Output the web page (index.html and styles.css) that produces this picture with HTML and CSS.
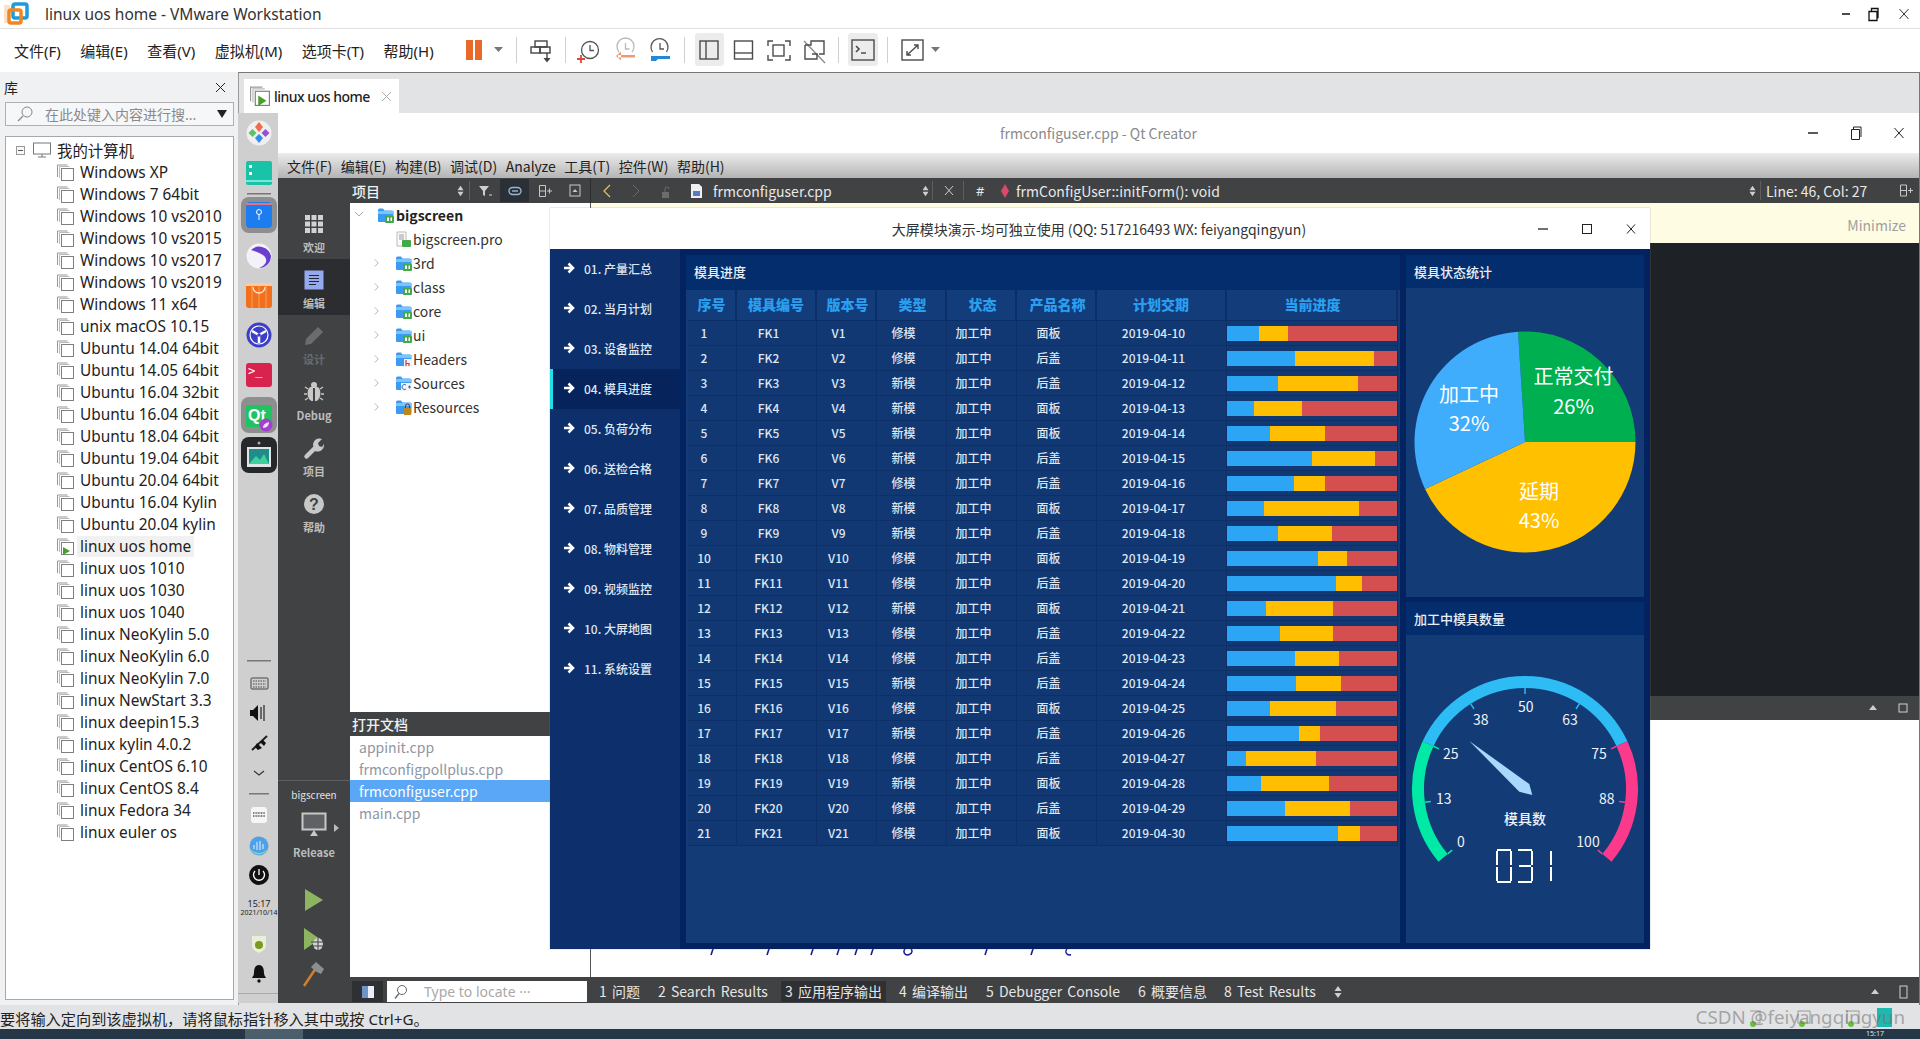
FILE: index.html
```html
<!DOCTYPE html>
<html lang="zh">
<head>
<meta charset="utf-8">
<title>linux uos home - VMware Workstation</title>
<link rel="stylesheet" href="styles.css">
</head>
<body>
<svg class="defs" aria-hidden="true">
  <symbol id="vm" viewBox="0 0 17 17"><path d="M.5 13V1h10" fill="none" stroke="#999"/><path d="M2.500 14V2.500h10" fill="none" stroke="#bbb"/><rect x="4.500" y="4.500" width="12" height="12" fill="#fff" stroke="#7f7f7f"/></symbol>
  <symbol id="folder" viewBox="0 0 16 16"><path d="M0 3a1.500 1.500 0 0 1 1.500-1.500H5l1.500 2H14A1.500 1.500 0 0 1 15.500 5v9a1 1 0 0 1-1 1H1a1 1 0 0 1-1-1z" fill="#3a9bf0"/><rect y="4" width="15.500" height="3" fill="#7cc4f7"/></symbol>
  <symbol id="qtfolder" viewBox="0 0 16 16"><use href="#folder"/><rect x="7" y="9" width="9" height="7" rx="1" fill="#41a948"/><rect x="9" y="10.500" width="2" height="3.500" fill="#fff"/><rect x="12.500" y="10.500" width="1.500" height="3.500" fill="#fff"/></symbol>
  <symbol id="chev" viewBox="0 0 8 10"><path d="M2 1l4 4-4 4" fill="none" stroke="#a8a8a8" stroke-width="1"/></symbol>
  <symbol id="sort" viewBox="0 0 8 14"><path d="M4 1l3.500 5h-7zM4 13l3.500-5h-7z" fill="#cfcfcf"/></symbol>
  <symbol id="arrow" viewBox="0 0 12 12"><path d="M1 6h8.500M5.500 1.500L10 6l-4.500 4.500" fill="none" stroke="#fff" stroke-width="2.500"/></symbol>
</svg>

<header class="vm-title">
  <svg class="vm-logo" width="26" height="24" viewBox="0 0 26 24"><rect x="10" y="2" width="14" height="14" rx="2" fill="none" stroke="#1f9bd8" stroke-width="3.500"/><rect x="6" y="8" width="12" height="13" rx="2" fill="none" stroke="#f0861f" stroke-width="3.500"/><rect x="1" y="3" width="6" height="18" fill="#f0861f" opacity=".25"/></svg>
  <span class="vm-title-text">linux uos home - VMware Workstation</span>
  <svg class="win-ctrls" width="70" height="24" viewBox="0 0 70 24"><path d="M0 12h8" stroke="#111" stroke-width="1.500"/><path d="M27 9.500h8v9h-8zM29.500 9.500V6.500H36v9h-1" fill="none" stroke="#111" stroke-width="1.300"/><path d="M57.500 7l9 10M66.500 7l-9 10" stroke="#333"/></svg>
</header>

<nav class="vm-menu">
  <div class="vm-menu-items"><span>文件(F)</span><span>编辑(E)</span><span>查看(V)</span><span>虚拟机(M)</span><span>选项卡(T)</span><span>帮助(H)</span></div>
  <svg class="vm-tools" width="510" height="43" viewBox="450 29 510 43">
    <rect x="695" y="33" width="29" height="33" rx="3" fill="#ececec"/><rect x="848" y="33" width="30" height="33" rx="3" fill="#ececec"/>
    <g stroke="#d0d0d0"><path d="M516.500 37v26M565.500 37v26M684.500 37v26M838.500 37v26M887.500 37v26"/></g>
    <rect x="466" y="40" width="7" height="20" fill="#e8692a"/><rect x="475" y="40" width="7" height="20" fill="#e8692a"/>
    <path d="M494 47h9l-4.500 5zM931 47h9l-4.500 5z" fill="#777"/>
    <g fill="none" stroke="#444" stroke-width="1.400"><rect x="535" y="41" width="12" height="6"/><rect x="531" y="47" width="9" height="6"/><rect x="540" y="47" width="10" height="6"/><path d="M547 53v7"/></g><path d="M543.500 58h7l-3.500 4.500z" fill="#444"/>
    <g fill="none" stroke="#555" stroke-width="1.300"><circle cx="590" cy="50" r="8.500"/><path d="M590 45v5.500h4"/></g><path d="M581 55v8M577 59h8" stroke="#d9483a" stroke-width="1.800"/>
    <g fill="none" stroke="#b9b9b9" stroke-width="1.300"><path d="M619 52a8.500 8.500 0 1 1 13 0"/><path d="M625.500 43v6h4"/></g><path d="M618 55h17v2.500h-17zM621 51.500l-5 4.500 5 4.500z" fill="#ef9a70"/>
    <g fill="none" stroke="#555" stroke-width="1.300"><path d="M652.500 52a8.500 8.500 0 1 1 14 0"/><path d="M660 43v6h4"/></g><path d="M651 56h19v3h-12l-2 2h-5z" fill="#2388d8"/>
    <g fill="none" stroke="#4c4c4c" stroke-width="1.400"><rect x="700" y="41" width="18" height="18"/><path d="M706 41v18"/><rect x="734.500" y="41" width="18" height="18"/><path d="M734.500 53h18"/><rect x="773" y="45" width="11" height="11"/><path d="M768 46v-5h5M785 41h5v5M790 55v5h-5M773 60h-5v-5"/><path d="M804 41l21 22" stroke="#8a8a8a"/><path d="M805 45h6v-4h13v13h-5M805 45v14h12v-5h-5"/><rect x="852" y="40" width="22" height="20"/><path d="M856 46l3 3-3 3M861 53h5" stroke-width="1.600"/><rect x="902" y="40" width="21" height="20"/><path d="M907 55l11-10M914 45h4v4M907 51v4h4"/></g>
  </svg>
</nav>

<main class="vm-main">
  <aside class="library">
    <div class="lib-head"><span>库</span><svg width="11" height="11" viewBox="0 0 11 11"><path d="M1 1l9 9M10 1l-9 9" stroke="#222"/></svg></div>
    <div class="lib-search">
      <svg width="18" height="18" viewBox="0 0 18 18"><circle cx="11" cy="7" r="5" fill="none" stroke="#888"/><path d="M7 11l-5 5" stroke="#888" stroke-width="1.300"/></svg>
      <span class="lib-search-text">在此处键入内容进行搜...</span>
      <svg width="10" height="8" viewBox="0 0 10 8"><path d="M0 0h10L5 8z" fill="#222"/></svg>
    </div>
    <ul class="lib-tree">
      <li class="lib-root"><svg width="9" height="9" viewBox="0 0 9 9"><rect x=".5" y=".5" width="8" height="8" fill="#f8f8f8" stroke="#999"/><path d="M2 4.500h5" stroke="#555"/></svg><svg width="18" height="17" viewBox="0 0 18 17"><rect x=".5" y="1" width="17" height="11" fill="#fff" stroke="#777"/><path d="M5 15h8M9 12v3" stroke="#777"/></svg><span>我的计算机</span></li>
      <li><svg><use href="#vm"/></svg>Windows XP</li>
      <li><svg><use href="#vm"/></svg>Windows 7 64bit</li>
      <li><svg><use href="#vm"/></svg>Windows 10 vs2010</li>
      <li><svg><use href="#vm"/></svg>Windows 10 vs2015</li>
      <li><svg><use href="#vm"/></svg>Windows 10 vs2017</li>
      <li><svg><use href="#vm"/></svg>Windows 10 vs2019</li>
      <li><svg><use href="#vm"/></svg>Windows 11 x64</li>
      <li><svg><use href="#vm"/></svg>unix macOS 10.15</li>
      <li><svg><use href="#vm"/></svg>Ubuntu 14.04 64bit</li>
      <li><svg><use href="#vm"/></svg>Ubuntu 14.05 64bit</li>
      <li><svg><use href="#vm"/></svg>Ubuntu 16.04 32bit</li>
      <li><svg><use href="#vm"/></svg>Ubuntu 16.04 64bit</li>
      <li><svg><use href="#vm"/></svg>Ubuntu 18.04 64bit</li>
      <li><svg><use href="#vm"/></svg>Ubuntu 19.04 64bit</li>
      <li><svg><use href="#vm"/></svg>Ubuntu 20.04 64bit</li>
      <li><svg><use href="#vm"/></svg>Ubuntu 16.04 Kylin</li>
      <li><svg><use href="#vm"/></svg>Ubuntu 20.04 kylin</li>
      <li class="lib-on"><svg viewBox="0 0 17 17"><use href="#vm"/><path d="M6 9l7 4-7 4z" fill="#4a9e2c"/></svg><span>linux uos home</span></li>
      <li><svg><use href="#vm"/></svg>linux uos 1010</li>
      <li><svg><use href="#vm"/></svg>linux uos 1030</li>
      <li><svg><use href="#vm"/></svg>linux uos 1040</li>
      <li><svg><use href="#vm"/></svg>linux NeoKylin 5.0</li>
      <li><svg><use href="#vm"/></svg>linux NeoKylin 6.0</li>
      <li><svg><use href="#vm"/></svg>linux NeoKylin 7.0</li>
      <li><svg><use href="#vm"/></svg>linux NewStart 3.3</li>
      <li><svg><use href="#vm"/></svg>linux deepin15.3</li>
      <li><svg><use href="#vm"/></svg>linux kylin 4.0.2</li>
      <li><svg><use href="#vm"/></svg>linux CentOS 6.10</li>
      <li><svg><use href="#vm"/></svg>linux CentOS 8.4</li>
      <li><svg><use href="#vm"/></svg>linux Fedora 34</li>
      <li><svg><use href="#vm"/></svg>linux euler os</li>
    </ul>
  </aside>

  <section class="vm-area">
    <div class="tabstrip">
      <div class="tab"><svg width="20" height="20" viewBox="0 0 17 17"><use href="#vm"/><path d="M7 8l7 4.500-7 4.500z" fill="#4a9e2c"/></svg><span>linux uos home</span><svg class="tab-x" width="11" height="11" viewBox="0 0 11 11"><path d="M1 1l9 9M10 1l-9 9" stroke="#aaa"/></svg></div>
    </div>
    <div class="guest">
      <svg class="dock" width="40" height="890" viewBox="238 113 40 890">
        <circle cx="259" cy="133" r="12.500" fill="#efefef"/><path d="M259 122l4 5-4 5-4-5z" fill="#ef6b4a"/><path d="M252.500 129l4 4-4 4-4-4z" fill="#5cc26a"/><path d="M265.500 129l4 4-4 4-4-4z" fill="#9a4fd0"/><path d="M259 134l4 4-4 5-4-5z" fill="#2f8fe8"/>
        <rect x="246" y="161" width="26" height="24" rx="2" fill="#19c3a8"/><rect x="246" y="180" width="26" height="2" fill="#7fe6d6"/><rect x="249" y="165" width="3" height="3" fill="#fff"/><rect x="249" y="172" width="3" height="3" fill="#fff"/>
        <rect x="247" y="193" width="24" height="1.500" fill="#777"/>
        <rect x="241" y="197" width="36" height="36" rx="8" fill="#8e8e8e"/><rect x="246" y="202" width="26" height="26" rx="4" fill="#1c7df0"/><rect x="246" y="203" width="26" height="2" fill="#e9727a"/><circle cx="259" cy="212" r="2.500" fill="none" stroke="#fff"/><path d="M259 214v6" stroke="#fff"/>
        <circle cx="259" cy="256" r="12.500" fill="#f4f2f8"/><path d="M251 250a12 12 0 0 1 20 6 12 12 0 0 1-12 12c5-2 8-5 7-9-1-4-8-7-15-9z" fill="#6a3fd0"/>
        <rect x="246" y="283" width="26" height="25" rx="3" fill="#f2701c"/><path d="M252 283v25M259 283v25M266 283v25" stroke="#f9a060"/><path d="M253 287a6 6 0 0 0 12 0" fill="none" stroke="#ffe4c8" stroke-width="1.300"/><rect x="246" y="283" width="26" height="3" fill="#ffc9a0"/>
        <circle cx="259" cy="335" r="12.500" fill="#3d3fc8"/><circle cx="259" cy="335" r="9" fill="none" stroke="#fff" stroke-width="1.200"/><path d="M259 335v8M259 335l-7-4M259 335l7-4" stroke="#fff" stroke-width="2.500"/><circle cx="259" cy="335" r="1.800" fill="#3d3fc8"/>
        <rect x="246" y="363" width="26" height="24" rx="3" fill="#d8234f"/><text x="248" y="375" class="dock-term">&gt;_</text>
        <rect x="241" y="397" width="36" height="36" rx="8" fill="#8e8e8e"/><rect x="246" y="405" width="26" height="22" rx="1" fill="#1fc35f"/><text x="248" y="421" class="dock-qt">Qt</text><circle cx="266" cy="425" r="6.500" fill="#a13fd0"/><path d="M263 428c0-4 3-5 6-6 0 3-2 6-6 6z" fill="#f0e0ff"/>
        <rect x="241" y="437" width="36" height="36" rx="8" fill="#26282c"/><rect x="247" y="447" width="24" height="20" fill="#dfe6e6"/><rect x="249" y="449" width="20" height="15" fill="#1f8d8a"/><path d="M249 464l7-8 4 4 4-6 5 10z" fill="#3fd0a0"/><circle cx="259" cy="443" r="1.500" fill="#aaa"/>
        <rect x="247" y="660" width="24" height="1.500" fill="#777"/>
        <rect x="251" y="678" width="17" height="11" rx="1" fill="none" stroke="#444"/><path d="M253 681h13M253 684h13M253 687h13" stroke="#444" stroke-dasharray="1.500 1"/>
        <path d="M250 710h3l5-5v16l-5-5h-3z" fill="#111"/><path d="M261 707v12M264 705v16" stroke="#333" stroke-width="1.300"/>
        <path d="M252 750l15-14" stroke="#222" stroke-width="2"/><path d="M255 747l2-4 5 5-4 2zM260 742l3-2 3 3-2 3z" fill="#111"/>
        <path d="M254 771l5 4 5-4" fill="none" stroke="#333" stroke-width="1.200"/>
        <rect x="249" y="793" width="20" height="1.500" fill="#777"/>
        <rect x="251" y="807" width="16" height="16" rx="3" fill="#f6f6f6"/><path d="M253 813h12M253 816h12" stroke="#555" stroke-dasharray="1 .6" stroke-width="1.500"/>
        <circle cx="259" cy="846" r="9.500" fill="#4fa0e8"/><path d="M250 848c3 5 13 8 18 0a9.500 9.500 0 0 1-18 0z" fill="#7dd8b0"/><path d="M254 845v4M257 842v8M260 841v9M263 844v5" stroke="#e8f4ff"/>
        <circle cx="259" cy="875" r="10" fill="#111"/><path d="M255 871a5.500 5.500 0 1 0 8 0M259 869v6" fill="none" stroke="#fff" stroke-width="1.300"/>
        <text x="259" y="907" class="dock-time">15:17</text><text x="259" y="915" class="dock-date">2021/10/14</text>
        <path d="M252 936h14v10c0 3-3 5-7 7-4-2-7-4-7-7z" fill="#e9efd8"/><circle cx="259" cy="945" r="4" fill="#7a9a20"/>
        <path d="M259 965c-4 0-5 4-5 8 0 3-2 4-2 5h14c0-1-2-2-2-5 0-4-1-8-5-8z" fill="#111"/><circle cx="259" cy="981" r="1.700" fill="#111"/>
        <rect x="238" y="993" width="40" height="1" fill="#aaa"/>
      </svg>
      <div class="desk">
        <div class="qt-title"><span class="qt-title-text">frmconfiguser.cpp - Qt Creator</span>
          <svg class="win-ctrls" width="100" height="18" viewBox="0 0 100 18"><path d="M2 9h10" stroke="#222" stroke-width="1.500"/><path d="M45.500 5.500h8v10h-8zM47.500 5.500V3h7.500v10" fill="none" stroke="#222"/><path d="M88.500 4l9 10M97.500 4l-9 10" stroke="#222"/></svg>
        </div>
        <div class="qt-menu"><span>文件(F)</span><span>编辑(E)</span><span>构建(B)</span><span>调试(D)</span><span>Analyze</span><span>工具(T)</span><span>控件(W)</span><span>帮助(H)</span></div>
        <div class="qt-body">
          <div class="modebar">
            <div class="mode"><svg width="24" height="24" viewBox="0 0 24 24" fill="#d2d2d2"><rect x="3" y="3" width="5" height="5"/><rect x="9.500" y="3" width="5" height="5"/><rect x="16" y="3" width="5" height="5"/><rect x="3" y="9.500" width="5" height="5"/><rect x="9.500" y="9.500" width="5" height="5"/><rect x="16" y="9.500" width="5" height="5"/><rect x="3" y="16" width="5" height="5"/><rect x="9.500" y="16" width="5" height="5"/><rect x="16" y="16" width="5" height="5"/></svg><span>欢迎</span></div>
            <div class="mode mode-on"><svg width="24" height="24" viewBox="0 0 24 24"><rect x="2.500" y="2.500" width="19" height="19" fill="#96a8ee"/><path d="M7 7.500h10M7 10.500h10M7 13.500h10M7 16.500h7" stroke="#23262b" stroke-width="1.100"/></svg><span>编辑</span></div>
            <div class="mode mode-off"><svg width="24" height="24" viewBox="0 0 24 24" fill="#6a6c6e"><path d="M16 3l5 5-12 12-6 1 1-6z"/></svg><span>设计</span></div>
            <div class="mode"><svg width="24" height="24" viewBox="0 0 24 24" fill="#c8c8c8"><path d="M7 8c2-2 8-2 10 0 2 3 2 9-1 12-1 1-2 1-3 1V8h-2v13c-1 0-2 0-3-1-3-3-3-9-1-12z"/><circle cx="12" cy="5" r="3"/><path d="M6 9L3 7M18 9l3-2M5 14H2M19 14h3M6 18l-3 2M18 18l3 2" stroke="#c8c8c8" stroke-width="1.300"/></svg><span class="mode-latin">Debug</span></div>
            <div class="mode"><svg width="24" height="24" viewBox="0 0 24 24"><path d="M4.500 20.500L13 12" stroke="#c8c8c8" stroke-width="4.500" stroke-linecap="round"/><path d="M11 9a6.500 6.500 0 0 1 9-6l-4 4 1 3 3 1 2-3a6.500 6.500 0 0 1-9 7z" fill="#c8c8c8"/></svg><span>项目</span></div>
            <div class="mode"><svg width="24" height="24" viewBox="0 0 24 24"><circle cx="12" cy="12" r="10" fill="#c8c8c8"/><text x="12" y="17.500" class="mode-q">?</text></svg><span>帮助</span></div>
            <div class="kit">
              <span class="kit-name">bigscreen</span>
              <div class="kit-mon"><svg width="26" height="24" viewBox="0 0 26 24"><rect x="1.500" y="1.500" width="23" height="16" fill="#5f6164" stroke="#c8c8c8" stroke-width="2"/><path d="M9 24l4-6 4 6z" fill="#c8c8c8"/></svg><svg class="kit-arrow" width="5" height="8" viewBox="0 0 5 8"><path d="M0 0l5 4-5 4z" fill="#bbb"/></svg></div>
              <span class="kit-rel">Release</span>
              <svg class="kit-play" width="20" height="24" viewBox="0 0 20 24"><path d="M1 1l18 11L1 23z" fill="#8db461"/></svg>
              <svg class="kit-dbg" width="22" height="24" viewBox="0 0 22 24"><path d="M1 1l16 11L1 23z" fill="#8db461"/><ellipse cx="15" cy="17" rx="5" ry="6" fill="#d4d4d4"/><path d="M15 11v12M8 15h14M8 19h14" stroke="#404244"/></svg>
              <svg class="kit-ham" width="24" height="28" viewBox="0 0 24 28"><path d="M3 26L15 8" stroke="#d47f2a" stroke-width="2.500"/><path d="M10 7l5-5 8 7-3 5-4-2-2-1z" fill="#8e8e8e"/></svg>
            </div>
          </div>
          <div class="qt-right">
            <div class="qt-tools">
              <span class="tool-label">项目</span>
              <svg width="136" height="25" viewBox="455 178 136 25"><use href="#sort" x="457" y="185" width="7" height="12"/><path d="M469.500 181v19" stroke="#5c5e60"/><path d="M479 186h10l-4 5v5l-2-1v-4z" fill="#cfcfcf"/><path d="M489 195h3" stroke="#cfcfcf"/><rect x="500" y="179" width="29" height="23" fill="#2a3038"/><rect x="509" y="187.500" width="12" height="7" rx="3.500" fill="none" stroke="#9cb4cc" stroke-width="1.400"/><path d="M512 191h6" stroke="#9cb4cc" stroke-width="1.400"/><path d="M539.500 185.500h6v11h-6zM539.500 191h6M547 191h5M549.500 188.500v5" fill="none" stroke="#c8c8c8"/><rect x="570" y="185" width="10" height="11" fill="none" stroke="#c8c8c8"/><path d="M572.500 192l2.500-3 2.500 3z" fill="#c8c8c8"/><path d="M590.500 178v25" stroke="#2b2d30"/></svg>
              <svg width="122" height="25" viewBox="591 178 122 25"><path d="M610 185l-6 6 6 6" fill="none" stroke="#e6c65a" stroke-width="1.200"/><path d="M633 185l6 6-6 6" fill="none" stroke="#6a6c6e"/><path d="M662 192h7v6h-7z" fill="#6a6c6e"/><path d="M665 192v-3a2 2 0 0 1 4 0" fill="none" stroke="#6a6c6e"/><path d="M691 184h8l3 3v11h-11z" fill="#f0f0f0"/><rect x="693" y="191" width="7" height="5" fill="#5a78c8"/></svg>
              <span class="tool-file">frmconfiguser.cpp</span>
              <svg width="92" height="25" viewBox="923 178 92 25"><use href="#sort" x="922" y="185" width="7" height="12"/><path d="M932.500 181v19" stroke="#5c5e60"/><path d="M945 186l8 9M953 186l-8 9" stroke="#cfcfcf"/><path d="M963.500 181v19" stroke="#5c5e60"/><text x="976" y="196" class="tool-hash">#</text><path d="M1005 184l4 7-4 7-4-7z" fill="#d94a6a"/></svg>
              <span class="tool-func">frmConfigUser::initForm(): void</span>
              <svg width="12" height="25" viewBox="1749 178 12 25"><use href="#sort" x="1749" y="185" width="7" height="12"/><path d="M1760.500 181v19" stroke="#5c5e60"/></svg>
              <span class="tool-line">Line: 46, Col: 27</span>
              <svg width="20" height="25" viewBox="0 0 20 25"><path d="M2.500 7h6v11h-6zM2.500 12.500h6M10 12.500h5M12.500 10v5" fill="none" stroke="#c8c8c8"/></svg>
            </div>
            <div class="qt-work">
              <div class="qt-side">
                <ul class="proj">
                  <li class="proj-root"><svg class="p-chev-down" width="10" height="8" viewBox="0 0 10 8"><path d="M1 1l4 4 4-4" fill="none" stroke="#a8a8a8"/></svg><svg width="16" height="16"><use href="#qtfolder"/></svg><b>bigscreen</b></li>
                  <li class="proj-file"><svg width="15" height="16" viewBox="0 0 15 16"><path d="M1 1h9v14H1z" fill="#fafafa" stroke="#bbb"/><path d="M3 4h5M3 6h5M3 8h5" stroke="#999"/><rect x="6" y="9" width="9" height="7" rx="1" fill="#41a948"/></svg>bigscreen.pro</li>
                  <li class="proj-dir"><svg class="p-chev" width="7" height="10"><use href="#chev"/></svg><svg width="16" height="16"><use href="#qtfolder"/></svg>3rd</li>
                  <li class="proj-dir"><svg class="p-chev" width="7" height="10"><use href="#chev"/></svg><svg width="16" height="16"><use href="#qtfolder"/></svg>class</li>
                  <li class="proj-dir"><svg class="p-chev" width="7" height="10"><use href="#chev"/></svg><svg width="16" height="16"><use href="#qtfolder"/></svg>core</li>
                  <li class="proj-dir"><svg class="p-chev" width="7" height="10"><use href="#chev"/></svg><svg width="16" height="16"><use href="#qtfolder"/></svg>ui</li>
                  <li class="proj-dir"><svg class="p-chev" width="7" height="10"><use href="#chev"/></svg><svg width="16" height="16" viewBox="0 0 16 16"><use href="#folder"/><rect x="8" y="8" width="8" height="8" fill="#f4f4f4"/><path d="M10 9v6M10 12.500h3v2.500" fill="none" stroke="#c83a3a" stroke-width="1.200"/></svg>Headers</li>
                  <li class="proj-dir"><svg class="p-chev" width="7" height="10"><use href="#chev"/></svg><svg width="16" height="16" viewBox="0 0 16 16"><use href="#folder"/><rect x="5" y="8" width="11" height="8" fill="#f4f4f4"/><path d="M10 10a2.500 2.500 0 1 0 0 4" fill="none" stroke="#2a6fb8"/><path d="M12 12h3M13.500 10.500v3" stroke="#2a6fb8"/></svg>Sources</li>
                  <li class="proj-dir"><svg class="p-chev" width="7" height="10"><use href="#chev"/></svg><svg width="16" height="16" viewBox="0 0 16 16"><use href="#folder"/><rect x="8" y="9" width="7" height="7" fill="#c0851e"/><path d="M9.500 9V7a2 2 0 0 1 4 0v2" fill="none" stroke="#444"/></svg>Resources</li>
                </ul>
                <div class="docs-head"><span>打开文档</span><svg width="40" height="24" viewBox="517 712 40 24"><use href="#sort" x="517" y="718" width="7" height="12"/><path d="M530.500 715v18" stroke="#5c5e60"/><path d="M539.500 718.500h6v11h-6zM539.500 724h6" fill="none" stroke="#c8c8c8"/></svg></div>
                <ul class="docs"><li>appinit.cpp</li><li>frmconfigpollplus.cpp</li><li class="docs-on">frmconfiguser.cpp</li><li>main.cpp</li></ul>
              </div>
              <div class="qt-editor">
                <div class="infobar"><span>Minimize</span></div>
                <div class="code"></div>
                <div class="out-bar"><svg width="60" height="24" viewBox="0 0 60 24"><path d="M11 14l4-5 4 5z" fill="#cfcfcf"/><rect x="41" y="8" width="8" height="8" fill="none" stroke="#cfcfcf"/></svg></div>
                <div class="out-pane"><svg class="out-marks" width="480" height="8" viewBox="590 949 480 8"><path d="M712 949l-2 6M768 949l-2 6M812 949l-2 6M838 949l-2 6M856 949l-2 6M872 949l-2 6M986 949l-2 6M1032 949l-2 6" stroke="#1a1a9e" stroke-width="1.600"/><path d="M904 949a3 3 0 0 0 5 5 3 3 0 0 0 1-5M1066 949a3 3 0 0 0 5 5 3 3 0 0 0 1-5" fill="none" stroke="#1a1a9e" stroke-width="1.500"/></svg></div>
              </div>
            </div>
            <div class="qt-bottom">
              <span class="side-toggle"><svg width="12" height="12" viewBox="0 0 12 12"><rect width="12" height="12" fill="#e8eef8"/><rect width="6" height="12" fill="#6d93c8"/></svg></span>
              <div class="locate"><svg width="16" height="16" viewBox="0 0 16 16"><circle cx="9" cy="6" r="4.500" fill="none" stroke="#666"/><path d="M6 9.500l-4 5" stroke="#666" stroke-width="1.300"/></svg><span>Type to locate ···</span></div>
              <div class="out-tabs"><span>1 问题</span><span>2 Search Results</span><span class="out-tab-on">3 应用程序输出</span><span>4 编译输出</span><span>5 Debugger Console</span><span>6 概要信息</span><span>8 Test Results</span><svg width="8" height="14"><use href="#sort"/></svg></div>
              <svg class="bottom-end" width="50" height="24" viewBox="0 0 50 24"><path d="M2 14l4-5 4 5z" fill="#cfcfcf"/><rect x="31" y="6" width="7" height="12" fill="none" stroke="#cfcfcf"/></svg>
            </div>
          </div>
        </div>
      </div>
    </div>
  </section>
</main>

<footer class="status">
  <span>要将输入定向到该虚拟机，请将鼠标指针移入其中或按 Ctrl+G。</span>
  <svg class="status-icons" width="170" height="22" viewBox="1750 1006 170 22"><g fill="none" stroke="#9a9a9a"><rect x="1748" y="1011" width="12" height="12"/><rect x="1798" y="1011" width="12" height="12"/><rect x="1847" y="1011" width="12" height="12"/></g><circle cx="1753" cy="1024" r="3" fill="#6cbf3a"/><circle cx="1802" cy="1024" r="3" fill="#6cbf3a"/><circle cx="1851" cy="1024" r="3" fill="#6cbf3a"/><rect x="1877" y="1008" width="15" height="19" fill="#1fb8b0"/></svg>
  <span class="watermark">CSDN @feiyangqingyun</span>
</footer>
<div class="taskbar"><span class="task-on"></span><span class="task-time">15:17</span></div>

<section class="dash">
  <div class="dash-title"><span>大屏模块演示-均可独立使用 (QQ: 517216493 WX: feiyangqingyun)</span>
    <svg class="dash-ctrls" width="100" height="14" viewBox="0 0 100 14"><path d="M2 7h10" stroke="#222" stroke-width="1.300"/><rect x="46.500" y="2.500" width="9" height="9" fill="none" stroke="#222"/><path d="M91 2.500l8 9M99 2.500l-8 9" stroke="#222"/></svg>
  </div>
  <div class="dash-body">
    <nav class="dash-nav">
      <a><svg width="12" height="12"><use href="#arrow"/></svg>01. 产量汇总</a>
      <a><svg width="12" height="12"><use href="#arrow"/></svg>02. 当月计划</a>
      <a><svg width="12" height="12"><use href="#arrow"/></svg>03. 设备监控</a>
      <a class="dash-nav-on"><svg width="12" height="12"><use href="#arrow"/></svg>04. 模具进度</a>
      <a><svg width="12" height="12"><use href="#arrow"/></svg>05. 负荷分布</a>
      <a><svg width="12" height="12"><use href="#arrow"/></svg>06. 送检合格</a>
      <a><svg width="12" height="12"><use href="#arrow"/></svg>07. 品质管理</a>
      <a><svg width="12" height="12"><use href="#arrow"/></svg>08. 物料管理</a>
      <a><svg width="12" height="12"><use href="#arrow"/></svg>09. 视频监控</a>
      <a><svg width="12" height="12"><use href="#arrow"/></svg>10. 大屏地图</a>
      <a><svg width="12" height="12"><use href="#arrow"/></svg>11. 系统设置</a>
    </nav>
    <div class="panel panel-main">
      <h2 class="panel-head">模具进度</h2>
      <div class="panel-body">
        <table class="mold">
          <colgroup><col class="c1"><col class="c2"><col class="c3"><col class="c4"><col class="c5"><col class="c6"><col class="c7"><col class="c8"></colgroup>
          <thead><tr><th>序号</th><th>模具编号</th><th>版本号</th><th>类型</th><th>状态</th><th>产品名称</th><th>计划交期</th><th>当前进度</th></tr></thead>
          <tbody>
<tr><td>1</td><td>FK1</td><td>V1</td><td>修模</td><td>加工中</td><td>面板</td><td>2019-04-10</td><td class="td-bar"><div class="bar"><i style="width:18.9%"></i><b style="width:17%"></b><u></u></div></td></tr>
<tr><td>2</td><td>FK2</td><td>V2</td><td>修模</td><td>加工中</td><td>后盖</td><td>2019-04-11</td><td class="td-bar"><div class="bar"><i style="width:40.2%"></i><b style="width:46.1%"></b><u></u></div></td></tr>
<tr><td>3</td><td>FK3</td><td>V3</td><td>新模</td><td>加工中</td><td>后盖</td><td>2019-04-12</td><td class="td-bar"><div class="bar"><i style="width:30%"></i><b style="width:47.1%"></b><u></u></div></td></tr>
<tr><td>4</td><td>FK4</td><td>V4</td><td>新模</td><td>加工中</td><td>面板</td><td>2019-04-13</td><td class="td-bar"><div class="bar"><i style="width:16.1%"></i><b style="width:28.1%"></b><u></u></div></td></tr>
<tr><td>5</td><td>FK5</td><td>V5</td><td>新模</td><td>加工中</td><td>面板</td><td>2019-04-14</td><td class="td-bar"><div class="bar"><i style="width:25.3%"></i><b style="width:32.4%"></b><u></u></div></td></tr>
<tr><td>6</td><td>FK6</td><td>V6</td><td>新模</td><td>加工中</td><td>后盖</td><td>2019-04-15</td><td class="td-bar"><div class="bar"><i style="width:50.1%"></i><b style="width:36.7%"></b><u></u></div></td></tr>
<tr><td>7</td><td>FK7</td><td>V7</td><td>修模</td><td>加工中</td><td>后盖</td><td>2019-04-16</td><td class="td-bar"><div class="bar"><i style="width:39.7%"></i><b style="width:18%"></b><u></u></div></td></tr>
<tr><td>8</td><td>FK8</td><td>V8</td><td>新模</td><td>加工中</td><td>面板</td><td>2019-04-17</td><td class="td-bar"><div class="bar"><i style="width:21.7%"></i><b style="width:56.1%"></b><u></u></div></td></tr>
<tr><td>9</td><td>FK9</td><td>V9</td><td>新模</td><td>加工中</td><td>后盖</td><td>2019-04-18</td><td class="td-bar"><div class="bar"><i style="width:30%"></i><b style="width:31.9%"></b><u></u></div></td></tr>
<tr><td>10</td><td>FK10</td><td>V10</td><td>修模</td><td>加工中</td><td>面板</td><td>2019-04-19</td><td class="td-bar"><div class="bar"><i style="width:53.7%"></i><b style="width:17%"></b><u></u></div></td></tr>
<tr><td>11</td><td>FK11</td><td>V11</td><td>修模</td><td>加工中</td><td>后盖</td><td>2019-04-20</td><td class="td-bar"><div class="bar"><i style="width:64.3%"></i><b style="width:15.4%"></b><u></u></div></td></tr>
<tr><td>12</td><td>FK12</td><td>V12</td><td>新模</td><td>加工中</td><td>面板</td><td>2019-04-21</td><td class="td-bar"><div class="bar"><i style="width:22.9%"></i><b style="width:39.5%"></b><u></u></div></td></tr>
<tr><td>13</td><td>FK13</td><td>V13</td><td>修模</td><td>加工中</td><td>后盖</td><td>2019-04-22</td><td class="td-bar"><div class="bar"><i style="width:31.2%"></i><b style="width:31.2%"></b><u></u></div></td></tr>
<tr><td>14</td><td>FK14</td><td>V14</td><td>修模</td><td>加工中</td><td>后盖</td><td>2019-04-23</td><td class="td-bar"><div class="bar"><i style="width:40%"></i><b style="width:25.9%"></b><u></u></div></td></tr>
<tr><td>15</td><td>FK15</td><td>V15</td><td>新模</td><td>加工中</td><td>后盖</td><td>2019-04-24</td><td class="td-bar"><div class="bar"><i style="width:40.6%"></i><b style="width:26.5%"></b><u></u></div></td></tr>
<tr><td>16</td><td>FK16</td><td>V16</td><td>修模</td><td>加工中</td><td>面板</td><td>2019-04-25</td><td class="td-bar"><div class="bar"><i style="width:25.3%"></i><b style="width:38.8%"></b><u></u></div></td></tr>
<tr><td>17</td><td>FK17</td><td>V17</td><td>新模</td><td>加工中</td><td>后盖</td><td>2019-04-26</td><td class="td-bar"><div class="bar"><i style="width:42.4%"></i><b style="width:12.3%"></b><u></u></div></td></tr>
<tr><td>18</td><td>FK18</td><td>V18</td><td>修模</td><td>加工中</td><td>后盖</td><td>2019-04-27</td><td class="td-bar"><div class="bar"><i style="width:11.2%"></i><b style="width:41.2%"></b><u></u></div></td></tr>
<tr><td>19</td><td>FK19</td><td>V19</td><td>新模</td><td>加工中</td><td>面板</td><td>2019-04-28</td><td class="td-bar"><div class="bar"><i style="width:20%"></i><b style="width:40%"></b><u></u></div></td></tr>
<tr><td>20</td><td>FK20</td><td>V20</td><td>修模</td><td>加工中</td><td>后盖</td><td>2019-04-29</td><td class="td-bar"><div class="bar"><i style="width:34.1%"></i><b style="width:38.3%"></b><u></u></div></td></tr>
<tr><td>21</td><td>FK21</td><td>V21</td><td>修模</td><td>加工中</td><td>面板</td><td>2019-04-30</td><td class="td-bar"><div class="bar"><i style="width:65.3%"></i><b style="width:12.9%"></b><u></u></div></td></tr>
          </tbody>
        </table>
      </div>
    </div>
    <div class="dash-right">
      <div class="panel panel-pie">
        <h2 class="panel-head panel-head-r">模具状态统计</h2>
        <div class="panel-body">
          <svg class="chart" width="238" height="309" viewBox="1406 288 238 309">
            <path d="M1525 442L1518.060 331.720A110.500 110.500 0 0 1 1635.500 442Z" fill="#00b050"/>
            <path d="M1525 442L1635.500 442A110.500 110.500 0 0 1 1425.020 489.050Z" fill="#ffc000"/>
            <path d="M1525 442L1425.020 489.050A110.500 110.500 0 0 1 1518.060 331.720Z" fill="#3fadfc"/>
            <g class="pie-text">
              <text x="1573.500" y="384">正常交付</text><text x="1573.500" y="414">26%</text>
              <text x="1469" y="402">加工中</text><text x="1469" y="431">32%</text>
              <text x="1539" y="499">延期</text><text x="1539" y="528">43%</text>
            </g>
          </svg>
        </div>
      </div>
      <div class="panel panel-gauge">
        <h2 class="panel-head panel-head-r">加工中模具数量</h2>
        <div class="panel-body">
          <svg class="chart" width="238" height="308" viewBox="1406 635 238 308">
            <title>031</title>
            <g fill="none" stroke-width="12">
              <path d="M1443.040 857.800A107 107 0 0 1 1428.020 743.800" stroke="#00eaa6"/>
              <path d="M1428.020 743.800A107 107 0 0 1 1621.980 743.800" stroke="#2dbcf4"/>
              <path d="M1621.980 743.800A107 107 0 0 1 1606.960 857.800" stroke="#fb3a8b"/>
            </g>
            <g stroke-width="1.500">
              <path d="M1447.600 853.900L1452.200 850.100M1424.900 802.200L1430.800 801.400M1433.500 746.300L1438.900 748.900" stroke="#00eaa6"/>
              <path d="M1470.700 703.800L1474 708.900M1525 688V694M1579.300 703.800L1576 708.900" stroke="#2dbcf4"/>
              <path d="M1616.500 746.300L1611.100 748.900M1625.100 802.200L1619.200 801.400M1602.400 853.900L1597.800 850.100" stroke="#fb3a8b"/>
            </g>
            <path d="M1469.300 741L1529.300 784L1532.300 795L1519.300 791.700Z" fill="#a8d8fb"/>
            <g class="g-labels">
              <text x="1461" y="847">0</text><text x="1443.700" y="804">13</text><text x="1450.700" y="759">25</text><text x="1480.700" y="725">38</text><text x="1525.700" y="712">50</text><text x="1570" y="725">63</text><text x="1599" y="759">75</text><text x="1606.700" y="804">88</text><text x="1588" y="847">100</text>
            </g>
            <text x="1525" y="824" class="g-title">模具数</text>
            <g fill="#fff">
              <rect x="1497" y="849" width="14" height="2"/><rect x="1497" y="881" width="14" height="2"/><rect x="1496" y="851" width="2" height="14"/><rect x="1496" y="867" width="2" height="14"/><rect x="1510" y="851" width="2" height="14"/><rect x="1510" y="867" width="2" height="14"/>
              <rect x="1518" y="849" width="14" height="2"/><rect x="1519" y="865" width="12" height="2"/><rect x="1518" y="881" width="14" height="2"/><rect x="1531" y="851" width="2" height="14"/><rect x="1531" y="867" width="2" height="14"/>
              <rect x="1550" y="851" width="2" height="14"/><rect x="1550" y="867" width="2" height="14"/>
            </g>
          </svg>
        </div>
      </div>
    </div>
  </div>
</section>
</body>
</html>
```

FILE: styles.css
```css
* { box-sizing: border-box; }
html, body { margin: 0; padding: 0; }
body {
  position: relative;
  width: 1920px;
  height: 1039px;
  overflow: hidden;
  display: flex;
  flex-direction: column;
  background: #fff;
  color: #222;
  font-family: "Noto Sans", "Noto Sans CJK SC", sans-serif;
  font-size: 14px;
}
ul { list-style: none; margin: 0; padding: 0; }
h2 { margin: 0; }
svg { display: block; flex: none; }
.defs { position: absolute; width: 0; height: 0; }

.vm-title { height: 29px; flex: none; display: flex; align-items: center; padding-left: 3px; border-bottom: 1px solid #e0e0e0; }
.vm-title-text { margin-left: 16px; font-size: 15.500px; color: #333; }
.win-ctrls { margin-left: auto; }
.vm-title .win-ctrls { margin-right: 8px; }

.vm-menu { height: 43px; flex: none; display: flex; align-items: center; }
.vm-menu-items { width: 450px; display: flex; gap: 19.500px; padding-left: 14px; font-size: 15px; color: #222; white-space: nowrap; }

.vm-main { height: 933px; flex: none; display: flex; }
.library { width: 238px; flex: none; display: flex; flex-direction: column; background: #f0f1f2; padding: 0 4px 5px 5px; }
.lib-head { height: 30px; flex: none; display: flex; align-items: center; justify-content: space-between; padding: 0 8px 0 0; font-size: 14px; margin-left: -1px; }
.lib-search { height: 24px; width: 229px; flex: none; display: flex; align-items: center; border: 1px solid #b0b0b0; background: #f6f7f8; padding: 0 6px 0 10px; gap: 11px; color: #8a8a8a; font-size: 14px; }
.lib-search-text { flex: 1; white-space: nowrap; overflow: hidden; }
.lib-tree { margin-top: 10px; flex: 1; width: 229px; background: #fff; border: 1px solid #a8a8a8; padding: 2px 0 0 51px; overflow: hidden; }
.lib-tree li { height: 22px; display: flex; align-items: center; gap: 6px; font-size: 15.400px; white-space: nowrap; color: #222; }
.lib-tree li > svg { width: 17px; height: 17px; }
.lib-tree .lib-root { margin-left: -41px; gap: 4px; }
.lib-tree .lib-root > svg:first-child { width: 9px; height: 9px; margin-right: 4px; }
.lib-tree .lib-root > svg:nth-child(2) { width: 18px; height: 17px; }
.lib-root span { margin-left: 2px; }
.lib-on span { background: #f1f1f1; padding: 0 3px; margin-left: -3px; }

.vm-area { flex: 1; display: flex; flex-direction: column; border-top: 1px solid #777; border-left: 1px solid #9a9a9a; border-right: 1px solid #777; min-width: 0; }
.tabstrip { height: 40px; flex: none; background: #e1e3e5; padding: 6px 0 0 5px; }
.tab { width: 155px; height: 34px; background: #fff; display: flex; align-items: center; padding-left: 6px; font-size: 14px; font-weight: 500; color: #222; letter-spacing: -.5px; }
.tab span { margin-left: 4px; }
.tab-x { margin-left: 11px; }

.guest { flex: 1; display: flex; min-height: 0; background: #e2e3e5; }
.dock { background: #cfcfcf; margin-left: -1px; }
.dock-term { font: 12px "DejaVu Sans Mono", monospace; fill: #fff; }
.dock-qt { font: bold 16px "Liberation Sans", sans-serif; fill: #fff; }
.dock-time { font: 9px "Noto Sans", sans-serif; fill: #222; text-anchor: middle; }
.dock-date { font: 7px "Noto Sans", sans-serif; fill: #222; text-anchor: middle; }
.desk { flex: 1; display: flex; flex-direction: column; min-width: 0; height: 890px; font-family: "Noto Sans CJK SC", "Noto Sans", sans-serif; }
.qt-title { height: 40px; flex: none; background: #fff; display: flex; align-items: center; padding-left: 722px; }
.qt-title-text { font-size: 14px; color: #8a8a8a; }
.qt-title .win-ctrls { margin-right: 13px; }
.qt-menu { height: 25px; flex: none; background: linear-gradient(#ececec, #b4b4b4); display: flex; align-items: center; gap: 8.500px; padding-left: 9px; font-size: 14px; color: #222; white-space: nowrap; }
.qt-body { flex: 1; display: flex; min-height: 0; }

.modebar { width: 72px; flex: none; background: #404244; padding-top: 25px; display: flex; flex-direction: column; }
.mode { height: 56px; flex: none; display: flex; flex-direction: column; align-items: center; padding-top: 9px; gap: 4px; color: #bdbdbd; font-size: 11px; font-weight: 700; line-height: 14px; }
.mode-on { background: #2b2d30; }
.mode-off { color: #6a6c6e; }
.mode-latin { font-weight: 700; }
.mode-q { font: bold 16px "Liberation Sans", sans-serif; fill: #404244; text-anchor: middle; }
.kit { margin-top: auto; height: 223px; border-top: 1px solid #5c5e60; display: flex; flex-direction: column; align-items: center; }
.kit-name { margin-top: 6px; font-size: 10px; color: #e4e4e4; line-height: 16px; }
.kit-mon { position: relative; margin-top: 9px; }
.kit-arrow { position: absolute; left: 33px; top: 12px; }
.kit-rel { margin-top: 9px; font-size: 11px; font-weight: 700; color: #bdbdbd; line-height: 14px; }
.kit-play { margin-top: 29px; }
.kit-dbg { margin-top: 15px; }
.kit-ham { margin-top: 9px; margin-right: 2px; }

.qt-right { flex: 1; min-width: 0; display: flex; flex-direction: column; }
.qt-tools { height: 25px; flex: none; background: #404244; display: flex; align-items: center; color: #e8e8e8; white-space: nowrap; }
.tool-label { width: 105px; padding-left: 2px; font-size: 14px; font-weight: 500; color: #f0f0f0; }
.tool-file { width: 210px; font-size: 14px; }
.tool-hash { font: 13px "Noto Sans", sans-serif; fill: #e8e8e8; }
.tool-func { width: 734px; padding-left: 1px; font-size: 14px; }
.tool-line { width: 137px; padding-left: 5px; font-size: 14px; }
.qt-work { flex: 1; display: flex; min-height: 0; }
.qt-side { width: 241px; flex: none; background: #fff; display: flex; flex-direction: column; border-right: 1px solid #555; }
.proj { height: 509px; flex: none; font-size: 14px; color: #333; }
.proj li { height: 24px; display: flex; align-items: center; }
.proj-root { padding-left: 4px; }
.p-chev-down { margin-right: 14px; }
.proj-root svg:nth-child(2) { margin-right: 2px; }
.proj-root b { font-weight: 700; color: #222; }
.proj-file { padding-left: 46px; }
.proj-file svg { margin-right: 2px; }
.proj-dir { padding-left: 23px; }
.p-chev { margin-right: 16px; }
.proj-dir svg:nth-child(2) { margin-right: 1px; }
.docs-head { height: 24px; flex: none; background: #404244; color: #f0f0f0; font-size: 14px; font-weight: 500; display: flex; align-items: center; justify-content: space-between; padding-left: 2px; overflow: hidden; }
.docs { font-size: 14px; color: #8f96a3; }
.docs li { height: 22px; line-height: 22px; padding-left: 9px; }
.docs .docs-on { background: #5aa7f7; color: #fff; }
.qt-editor { flex: 1; min-width: 0; display: flex; flex-direction: column; }
.infobar { height: 40px; flex: none; background: #fefce2; display: flex; align-items: center; justify-content: flex-end; padding: 4px 13px 0 0; font-size: 14px; color: #a0a0a0; }
.code { height: 453px; flex: none; background: #1e2126; }
.out-bar { height: 24px; flex: none; background: #404244; display: flex; justify-content: flex-end; padding-right: 1px; }
.out-pane { flex: 1; background: #fff; overflow: hidden; position: relative; }
.out-marks { margin-top: 229px; }
.qt-bottom { height: 26px; flex: none; background: #404244; display: flex; align-items: center; padding: 0 0 0 2px; border-top: 3px solid #404244; }
.side-toggle { width: 31px; height: 21px; background: #2e3033; display: flex; align-items: center; justify-content: center; }
.locate { width: 200px; height: 21px; margin-left: 4px; background: #fff; display: flex; align-items: center; padding-left: 6px; gap: 15px; color: #a9a9a9; font-size: 14px; font-family: "Noto Sans", sans-serif; white-space: nowrap; }
.out-tabs { display: grid; grid-template-columns: 59px 127px 114px 87px 152px 86px 114px 20px; margin-left: 8px; align-items: center; color: #e6e6e6; font-size: 14px; word-spacing: 2px; white-space: nowrap; }
.out-tabs span { padding: 0 4px; height: 21px; line-height: 21px; justify-self: start; }
.out-tabs .out-tab-on { background: #2e3033; }
.bottom-end { margin-left: auto; }

.status { position: relative; height: 24px; flex: none; background: #e2e3e5; display: flex; align-items: center; justify-content: space-between; padding-top: 1px; font-size: 15.200px; color: #222; white-space: nowrap; }
.status-icons { position: absolute; right: 0; top: 1px; }
.watermark { position: absolute; right: 15px; top: 0; font-size: 18.800px; line-height: 24px; color: rgba(110, 110, 110, .55); }
.taskbar { height: 10px; flex: none; background: #253747; position: relative; overflow: hidden; }
.task-on { display: block; width: 58px; height: 10px; margin-left: 245px; background: #4a5e6c; }
.task-time { position: absolute; right: 36px; top: 0; color: #e8e8e8; font-size: 7px; line-height: 10px; }

.dash { position: absolute; left: 550px; top: 208px; width: 1100px; height: 741px; display: flex; flex-direction: column; font-family: "Noto Sans CJK SC", "Noto Sans", sans-serif; box-shadow: 0 0 1px #888; }
.dash-title { position: relative; height: 41px; flex: none; background: #fff; display: flex; align-items: center; justify-content: center; font-size: 14px; color: #333; padding-right: 2px; }
.dash-ctrls { position: absolute; right: 14px; top: 14px; }
.dash-body { flex: 1; display: flex; background: #02235f; min-height: 0; }
.dash-nav { width: 130px; flex: none; background: #0d2f6b; }
.dash-nav a { height: 40px; display: flex; align-items: center; gap: 9px; padding: 0 0 2px 13px; font-size: 12px; font-weight: 500; color: #dfe6f2; white-space: nowrap; }
.dash-nav .dash-nav-on { background: #06235c; border-left: 3px solid #1fdfe8; padding-left: 10px; }
.panel { display: flex; flex-direction: column; background: #133b76; }
.panel-main { width: 714px; height: 688px; margin: 6px 0 0 6px; flex: none; }
.panel-head { height: 35px; flex: none; background: #032d6c; padding-left: 8px; font-size: 13px; font-weight: 500; line-height: 33px; color: #e8eef8; }
.panel-head-r { height: 33px; line-height: 33px; }
.panel-body { flex: 1; min-height: 0; }
.mold { width: 710px; margin-left: 2px; table-layout: fixed; border-collapse: separate; border-spacing: 0; }
.c1 { width: 49px; } .c2 { width: 80px; } .c3 { width: 60px; } .c4 { width: 70px; } .c5 { width: 70px; } .c6 { width: 80px; } .c7 { width: 130px; } .c8 { width: 171px; }
.mold th { height: 31px; padding: 0 0 2px; font-size: 14px; font-weight: 900; color: #2a9ff0; background: #123c7a; border-right: 2px solid #0c2e66; border-bottom: 1px solid #0c2e66; }
.mold th:nth-child(n+3):nth-child(-n+6) { padding-left: 3px; }
.mold th:last-child { padding-left: 2px; }
.mold td { height: 25px; padding: 0 16px 0 0; text-align: center; font-size: 12px; font-weight: 500; color: #dfe6f2; background: #113872; border-right: 1px solid #0d3068; border-bottom: 1px solid #0d3068; line-height: 14px; white-space: nowrap; }
.mold .td-bar { padding: 0 1px 0 0; }
.bar { display: flex; width: 170px; height: 15px; }
.bar i { background: #2ca5f5; }
.bar b { background: #ffbf00; }
.bar u { flex: 1; background: #d45050; }
.dash-right { width: 238px; margin: 6px 0 0 6px; flex: none; display: flex; flex-direction: column; }
.panel-pie { height: 342px; flex: none; }
.panel-gauge { height: 341px; margin-top: 5px; flex: none; }
.chart { display: block; }
.pie-text text { font-size: 20px; fill: #fff; text-anchor: middle; }
.g-labels text { font-size: 14px; fill: #eef3fa; text-anchor: middle; }
.g-title { font-size: 14px; font-weight: 500; fill: #eef3fa; text-anchor: middle; }
```
